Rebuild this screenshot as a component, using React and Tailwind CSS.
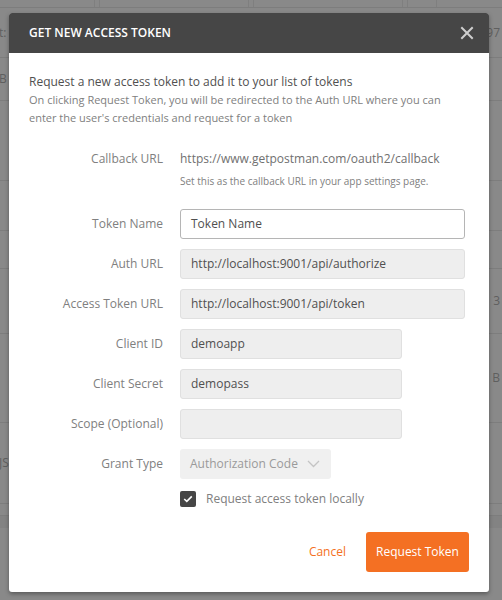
import React from "react";

const Label = ({ children }) => (
  <div className="w-[134px] shrink-0 text-right text-[12px] text-[#808080]">{children}</div>
);

const Field = ({ label, value, width, white }) => (
  <div className="flex items-center gap-[17px]">
    <Label>{label}</Label>
    <div
      className={
        "h-[30px] rounded-[3px] border px-[10px] flex items-center text-[12px] text-[#505050] " +
        width +
        (white ? " bg-white border-[#b5b5b5]" : " bg-[#eeeeee] border-[#e0e0e0]")
      }
    >
      {value}
    </div>
  </div>
);

export default function App() {
  const bgRows = [
    { h: "h-[50px]", l: "t:", r: "97" },
    { h: "h-[43px]", l: "B" },
    { h: "h-[80px]" },
    { h: "h-[50px]" },
    { h: "h-[38px]" },
    { h: "h-[65px]", r: "3" },
    { h: "h-[89px]", r: "B" },
    { h: "h-[81px]", l: "JS" },
    { h: "h-[12px]" },
    { h: "h-[13px]", cls: "bg-[#838383]" },
  ];
  return (
    <div className="relative w-[502px] h-[600px] overflow-hidden bg-[#898989] font-['Open_Sans',sans-serif]">
      {/* dimmed app behind */}
      <div className="flex flex-col">
        <div className="flex h-[7px]">
          <div className="w-[95px] border-r border-[#7f7f7f]" />
          <div className="w-[5px] border-r border-[#7f7f7f]" />
          <div className="w-[149px] border-r border-[#7f7f7f]" />
          <div className="w-[5px] border-r border-[#7f7f7f]" />
          <div className="w-[149px] border-r border-[#7f7f7f]" />
          <div className="w-[5px] border-r border-[#7f7f7f]" />
          <div className="w-[29px] border-r border-[#7f7f7f]" />
        </div>
        {bgRows.map((r, i) => (
          <div
            key={i}
            className={"flex items-center justify-between border-t border-[#7d7d7d] text-[12px] text-[#5f5f5f] " + r.h + " " + (r.cls || "")}
          >
            <span className="-ml-[1px]">{r.l || ""}</span>
            <span className="mr-[2px]">{r.r || ""}</span>
          </div>
        ))}
      </div>

      {/* modal */}
      <div className="absolute left-[9px] top-[13px] w-[480px] h-[579px] rounded-[3px] bg-white shadow-[0_2px_4px_rgba(0,0,0,0.35)] overflow-hidden">
        <div className="h-[40px] bg-[#464646] flex items-center justify-between pl-[20px] pr-[14px]">
          <div className="text-[12px] font-semibold text-white">GET NEW ACCESS TOKEN</div>
          <svg width="14" height="14" viewBox="0 0 14 14" className="mr-[1px]">
            <path d="M2 2 L12 12 M12 2 L2 12" stroke="#cfcfcf" strokeWidth="2" strokeLinecap="square" />
          </svg>
        </div>
        <div className="px-[20px] pt-[20px] pb-[20px] flex flex-col">
          <div className="text-[12px] leading-[18px] text-[#505050]">
            Request a new access token to add it to your list of tokens
          </div>
          <div className="text-[11px] leading-[18px] text-[#808080]">
            On clicking Request Token, you will be redirected to the Auth URL where you can
            <br />
            enter the user's credentials and request for a token
          </div>

          <div className="mt-[23px] flex items-center gap-[17px] leading-[18px]">
            <Label>Callback URL</Label>
            <div className="text-[12px] text-[#707070]">https://www.getpostman.com/oauth2/callback</div>
          </div>
          <div className="mt-[5px] ml-[151px] text-[10px] leading-[16px] text-[#808080]">
            Set this as the callback URL in your app settings page.
          </div>

          <div className="mt-[20px] flex flex-col gap-[10px]">
            <Field label="Token Name" value="Token Name" width="w-[285px]" white />
            <Field label="Auth URL" value="http://localhost:9001/api/authorize" width="w-[285px]" />
            <Field label="Access Token URL" value="http://localhost:9001/api/token" width="w-[285px]" />
            <Field label="Client ID" value="demoapp" width="w-[222px]" />
            <Field label="Client Secret" value="demopass" width="w-[222px]" />
            <Field label="Scope (Optional)" value="" width="w-[222px]" />
            <div className="flex items-center gap-[17px]">
              <Label>Grant Type</Label>
              <div className="h-[30px] w-[151px] rounded-[3px] bg-[#f0f0f0] flex items-center justify-between pl-[10px] pr-[11px] text-[12px] text-[#9a9a9a]">
                <span>Authorization Code</span>
                <svg width="13" height="8" viewBox="0 0 13 8">
                  <path d="M1 1 L6.5 6.5 L12 1" fill="none" stroke="#c4c4c4" strokeWidth="1.3" />
                </svg>
              </div>
            </div>
          </div>

          <div className="mt-[12px] ml-[151px] flex items-center gap-[10px] h-[16px]">
            <div className="w-[16px] h-[16px] rounded-[2px] bg-[#464646] flex items-center justify-center">
              <svg width="10" height="8" viewBox="0 0 10 8">
                <path d="M1.2 4 L3.8 6.4 L8.8 1.4" fill="none" stroke="white" strokeWidth="1.6" />
              </svg>
            </div>
            <span className="text-[12px] text-[#808080]">Request access token locally</span>
          </div>

          <div className="mt-[25px] flex items-center justify-end gap-[20px]">
            <span className="text-[12px] text-[#f47023]">Cancel</span>
            <div className="h-[40px] w-[103px] rounded-[3px] bg-[#f47023] flex items-center justify-center text-[12px] text-white">
              Request Token
            </div>
          </div>
        </div>
      </div>
    </div>
  );
}
